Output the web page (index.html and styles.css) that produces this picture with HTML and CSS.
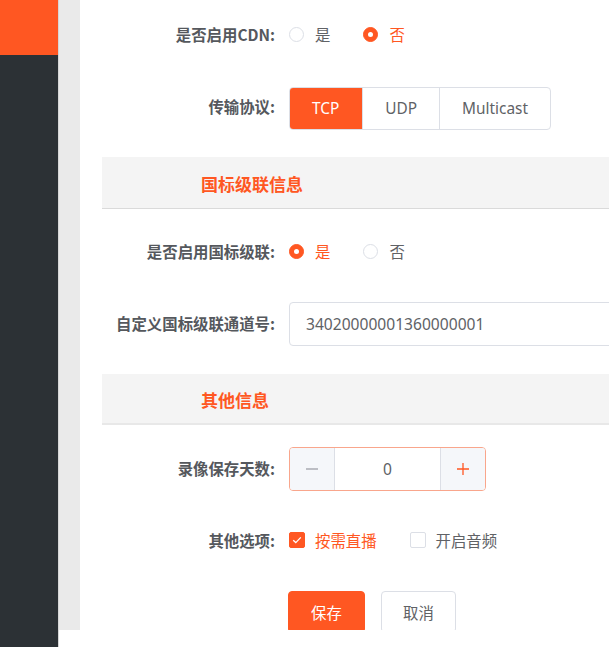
FILE: index.html
```html
<!DOCTYPE html>
<html lang="zh-CN">
<head>
<meta charset="utf-8">
<title>设置</title>
<link rel="stylesheet" href="styles.css">
</head>
<body>
<div class="page">
  <aside class="sidebar">
    <div class="logo"></div>
  </aside>
  <main class="main">
    <div class="card">
      <div class="form-item">
        <label class="label">是否启用CDN:</label>
        <div class="control radios">
          <span class="radio"><span class="dot"></span><span class="rtext">是</span></span>
          <span class="radio checked"><span class="dot"></span><span class="rtext">否</span></span>
        </div>
      </div>
      <div class="form-item">
        <label class="label">传输协议:</label>
        <div class="control">
          <div class="seg">
            <span class="seg-btn active">TCP</span>
            <span class="seg-btn">UDP</span>
            <span class="seg-btn">Multicast</span>
          </div>
        </div>
      </div>

      <div class="section"><span class="section-title">国标级联信息</span></div>

      <div class="form-item">
        <label class="label">是否启用国标级联:</label>
        <div class="control radios">
          <span class="radio checked"><span class="dot"></span><span class="rtext">是</span></span>
          <span class="radio"><span class="dot"></span><span class="rtext">否</span></span>
        </div>
      </div>
      <div class="form-item">
        <label class="label">自定义国标级联通道号:</label>
        <div class="control">
          <div class="input">34020000001360000001</div>
        </div>
      </div>

      <div class="section second"><span class="section-title">其他信息</span></div>

      <div class="form-item">
        <label class="label">录像保存天数:</label>
        <div class="control">
          <div class="number">
            <span class="num-btn minus">
              <svg width="14" height="14" viewBox="0 0 14 14"><path d="M1 7h12" stroke="#a8abb2" stroke-width="1.3"/></svg>
            </span>
            <span class="num-val">0</span>
            <span class="num-btn plus">
              <svg width="14" height="14" viewBox="0 0 14 14"><path d="M1 7h12M7 1v12" stroke="#ff5722" stroke-width="1.3"/></svg>
            </span>
          </div>
        </div>
      </div>
      <div class="form-item">
        <label class="label">其他选项:</label>
        <div class="control checks">
          <span class="check checked">
            <span class="box"><svg width="10" height="8" viewBox="0 0 10 8"><path d="M1.2 4.2L3.8 6.6L8.8 1.4" fill="none" stroke="#fff" stroke-width="1.3"/></svg></span>
            <span class="ctext">按需直播</span>
          </span>
          <span class="check">
            <span class="box"></span>
            <span class="ctext">开启音频</span>
          </span>
        </div>
      </div>
      <div class="actions">
        <span class="btn primary">保存</span>
        <span class="btn">取消</span>
      </div>
    </div>
  </main>
</div>
</body>
</html>
```

FILE: styles.css
```css
html, body {
  margin: 0;
  padding: 0;
  background: #fff;
}
body {
  font-family: "Noto Sans", "Noto Sans CJK SC", sans-serif;
  font-size: 15px;
  color: #606266;
}
.page {
  display: flex;
  height: 647px;
  overflow: hidden;
  align-items: flex-start;
}
.sidebar {
  width: 58px;
  height: 647px;
  background: #2c3135;
  border-right: 1px solid #d6d6d6;
  flex: none;
}
.logo {
  height: 55px;
  background: #ff5722;
}
.main {
  flex: 1;
  height: 630px;
  background: #eaeaea;
  padding-left: 21px;
  overflow: hidden;
}
.card {
  background: #fff;
  height: 630px;
  width: 560px;
  padding: 13px 0 0 22px;
  box-sizing: border-box;
}
.form-item {
  display: flex;
  align-items: center;
  height: 44px;
  margin-bottom: 28px;
}
.label {
  width: 173px;
  padding-right: 14px;
  text-align: right;
  font-weight: bold;
  font-size: 15.4px;
  color: #55585d;
  flex: none;
  font-family: "Noto Sans CJK SC", sans-serif;
  margin-top: -2px;
}
.control {
  display: flex;
  align-items: center;
  flex: 1;
  min-width: 0;
}
.radios, .checks {
  margin-top: -2px;
}
.radio {
  display: inline-flex;
  align-items: center;
  margin-right: 33px;
}
.radio .dot {
  width: 13px;
  height: 13px;
  border: 1px solid #dcdfe6;
  border-radius: 50%;
  box-sizing: content-box;
  display: inline-flex;
  align-items: center;
  justify-content: center;
  margin-right: 11px;
}
.radio.checked .dot {
  background: #ff5722;
  border-color: #ff5722;
}
.radio.checked .dot::after {
  content: "";
  width: 5px;
  height: 5px;
  background: #fff;
  border-radius: 50%;
}
.rtext {
  font-family: "Noto Sans CJK SC", sans-serif;
  font-size: 15.4px;
  color: #606266;
}
.radio.checked .rtext {
  color: #ff5722;
}
.seg {
  display: flex;
  height: 43px;
  margin-top: 2px;
  border: 1px solid #dcdfe6;
  border-radius: 4px;
  box-sizing: border-box;
  overflow: hidden;
}
.seg-btn {
  display: flex;
  align-items: center;
  justify-content: center;
  padding: 0 22px;
  font-size: 15.4px;
  color: #606266;
  border-left: 1px solid #dcdfe6;
}
.seg-btn:first-child {
  border-left: none;
}
.seg-btn.active {
  background: #ff5722;
  color: #fff;
  margin: -1px 0 -1px -1px;
  padding: 0 23px 0 23px;
}
.section {
  height: 52px;
  background: #f4f4f4;
  border-bottom: 1px solid #dadada;
  margin-bottom: 21px;
  display: flex;
  align-items: center;
  padding-left: 99px;
  width: 507px;
  box-sizing: border-box;
}
.section.second {
  height: 51px;
  border-bottom: 2px solid #e8e8e8;
  margin-bottom: 22px;
}
.section-title {
  font-family: "Noto Sans CJK SC", sans-serif;
  font-weight: bold;
  font-size: 17px;
  color: #ff5722;
  margin-top: 1px;
}
.input {
  height: 44px;
  width: 340px;
  flex: none;
  border: 1px solid #dcdfe6;
  border-radius: 4px;
  box-sizing: border-box;
  display: flex;
  align-items: center;
  padding-left: 16px;
  font-size: 15.6px;
  color: #606266;
}
.number {
  display: flex;
  width: 197px;
  height: 44px;
  border: 1px solid #f9a68c;
  border-radius: 4px;
  box-sizing: border-box;
  overflow: hidden;
}
.num-btn {
  width: 44px;
  background: #f5f7fa;
  display: flex;
  align-items: center;
  justify-content: center;
  flex: none;
}
.num-btn.minus {
  border-right: 1px solid #dcdfe6;
}
.num-btn.plus {
  border-left: 1px solid #dcdfe6;
}
.num-val {
  flex: 1;
  display: flex;
  align-items: center;
  justify-content: center;
  font-size: 15.6px;
  color: #606266;
}
.check {
  display: inline-flex;
  align-items: center;
  margin-right: 33px;
}
.check .box {
  width: 14px;
  height: 14px;
  border: 1px solid #dcdfe6;
  border-radius: 2px;
  display: inline-flex;
  align-items: center;
  justify-content: center;
  margin-right: 10px;
  background: #fff;
}
.check.checked .box {
  background: #ff5722;
  border-color: #ff5722;
}
.ctext {
  font-family: "Noto Sans CJK SC", sans-serif;
  font-size: 15.4px;
  color: #606266;
}
.check.checked .ctext {
  color: #ff5722;
}
.actions {
  display: flex;
  padding-left: 186px;
  gap: 16px;
}
.btn {
  display: flex;
  align-items: center;
  justify-content: center;
  height: 42px;
  width: 75px;
  border: 1px solid #dcdfe6;
  border-radius: 4px;
  box-sizing: border-box;
  font-family: "Noto Sans CJK SC", sans-serif;
  font-size: 15.4px;
  color: #606266;
  background: #fff;
}
.btn.primary {
  width: 77px;
  background: #ff5722;
  border-color: #ff5722;
  color: #fff;
}
```
